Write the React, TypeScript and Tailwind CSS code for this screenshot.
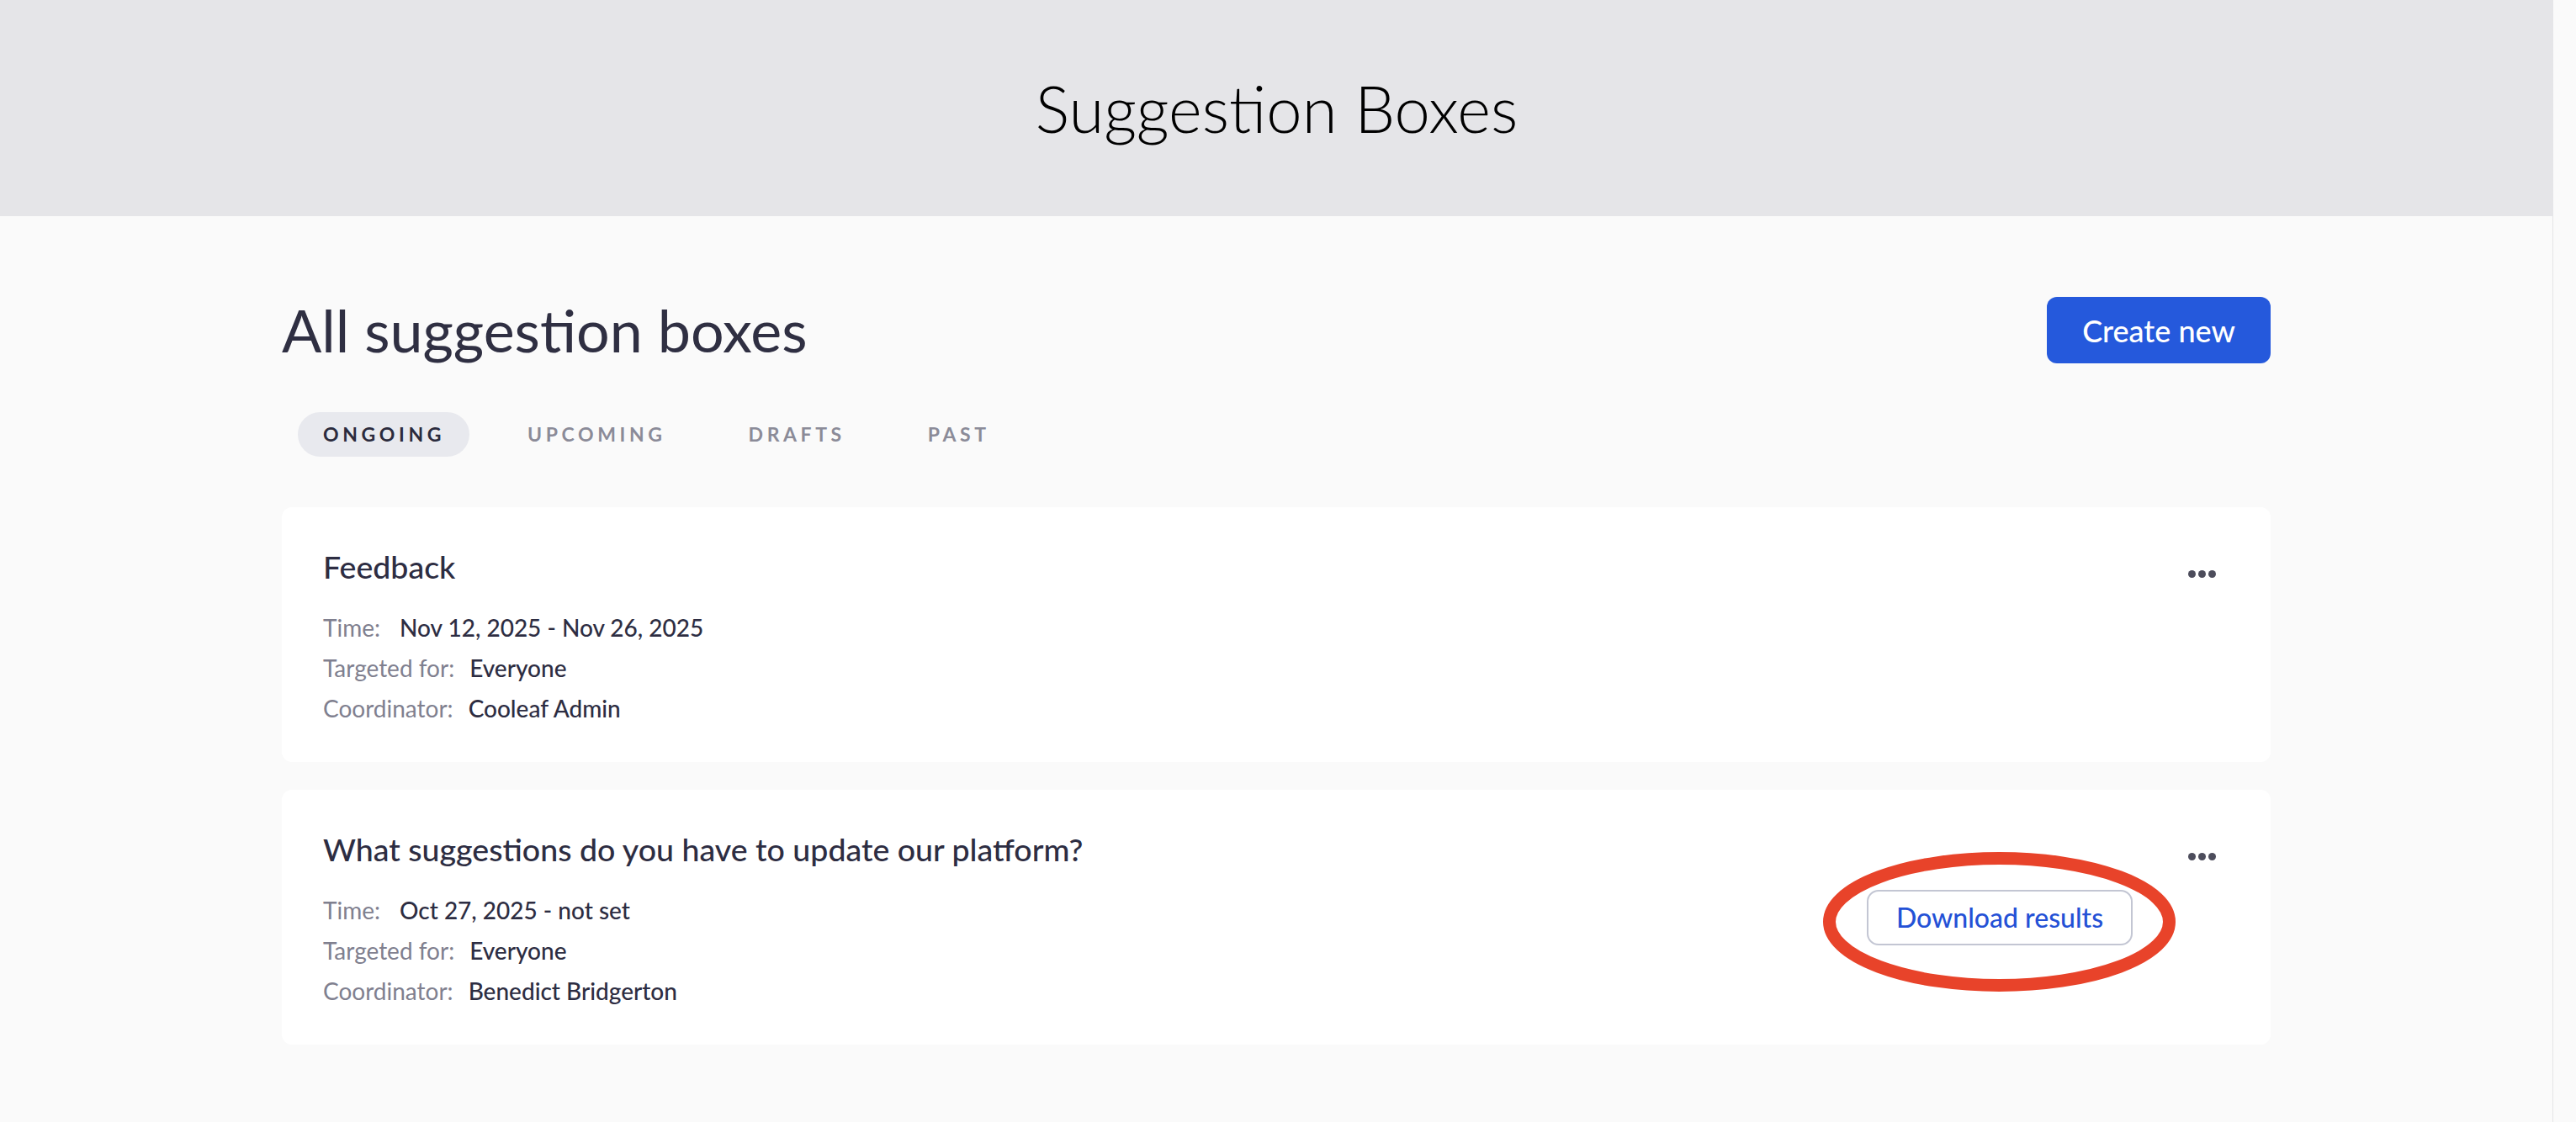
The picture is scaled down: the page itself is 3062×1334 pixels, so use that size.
import { useState } from "react";

type Box = {
  title: string;
  time: string;
  target: string;
  coordinator: string;
  canDownload?: boolean;
};

const boxes: Box[] = [
  {
    title: "Feedback",
    time: "Nov 12, 2025 - Nov 26, 2025",
    target: "Everyone",
    coordinator: "Cooleaf Admin",
  },
  {
    title: "What suggestions do you have to update our platform?",
    time: "Oct 27, 2025 - not set",
    target: "Everyone",
    coordinator: "Benedict Bridgerton",
    canDownload: true,
  },
];

const tabs = ["ONGOING", "UPCOMING", "DRAFTS", "PAST"];

const Dots = () => (
  <div className="flex gap-[3px] mt-[26px]">
    <span className="w-[9px] h-[9px] rounded-full bg-[#4d4d5c]" />
    <span className="w-[9px] h-[9px] rounded-full bg-[#4d4d5c]" />
    <span className="w-[9px] h-[9px] rounded-full bg-[#4d4d5c]" />
  </div>
);

const BoxCard = ({ box }: { box: Box }) => (
  <div className="relative flex h-[303px] rounded-[12px] bg-white pl-[49px] pr-[65px] pt-[49px]">
    <div className="flex-1 min-w-0">
      <div className="text-[37.5px] leading-[44px] font-medium text-[#2d2d42]">{box.title}</div>
      <div className="mt-[26px] text-[28px] leading-[48px]">
        <div className="flex">
          <span className="text-[#80808f]">Time:</span>
          <span className="ml-[23px] font-medium text-[#2d2d42]">{box.time}</span>
        </div>
        <div className="flex">
          <span className="text-[#80808f]">Targeted for:</span>
          <span className="ml-[18px] font-medium text-[#2d2d42]">{box.target}</span>
        </div>
        <div className="flex">
          <span className="text-[#80808f]">Coordinator:</span>
          <span className="ml-[18px] font-medium text-[#2d2d42]">{box.coordinator}</span>
        </div>
      </div>
    </div>

    {box.canDownload && (
      <button className="self-center -mt-[49px] mr-[66px] h-[66px] w-[316px] rounded-[14px] border-2 border-[#c3c6d3] bg-white text-[32px] font-medium text-[#2451d6]">
        Download results
      </button>
    )}

    <Dots />

    {/* highlight ring drawn over the button */}
    {box.canDownload && (
      <svg
        className="absolute left-[1832px] top-[74px] pointer-events-none"
        width="419"
        height="166"
        viewBox="0 0 419 166"
      >
        <ellipse cx="209.5" cy="83" rx="202" ry="75.5" fill="none" stroke="#e8432a" strokeWidth="15" />
      </svg>
    )}
  </div>
);

export default function App() {
  const [active, setActive] = useState("ONGOING");

  return (
    <div className="flex min-h-screen w-full bg-[#fafafa] font-['Lato',sans-serif]">
      <div className="flex-1 min-w-0 flex flex-col">
        {/* HEADER */}
        <header className="h-[257px] bg-[#e5e5e8] flex items-center justify-center">
          <h1 className="text-[76px] font-light text-black">Suggestion Boxes</h1>
        </header>

        <main className="flex-1 border-r border-[#e4e4e6]">
          <div className="mx-auto w-[2364px] pt-[96px] pb-[90px]">
            <div className="flex items-center justify-between">
              <h2 className="text-[70px] leading-[79px] text-[#2f2f42]">All suggestion boxes</h2>
              <button className="h-[79px] w-[266px] rounded-[12px] bg-[#2559dc] text-[36px] font-medium text-white">
                Create new
              </button>
            </div>

            {/* TABS */}
            <div className="mt-[58px] flex gap-[39px] pl-[19px]">
              {tabs.map((t) => (
                <button
                  key={t}
                  onClick={() => setActive(t)}
                  className={
                    t === active
                      ? "h-[53px] rounded-full bg-[#e8e9ee] pl-[30px] pr-[29px] text-[23px] font-bold tracking-[0.2em] text-[#2b2b3d]"
                      : "h-[53px] rounded-full pl-[30px] pr-[29px] text-[23px] font-bold tracking-[0.2em] text-[#8b8b98]"
                  }
                >
                  {t}
                </button>
              ))}
            </div>

            {/* LIST */}
            <div className="mt-[60px] flex flex-col gap-[33px]">
              {boxes.map((b) => (
                <BoxCard key={b.title} box={b} />
              ))}
            </div>
          </div>
        </main>
      </div>
      <div className="w-[27px] bg-[#fafafa]" />
    </div>
  );
}
